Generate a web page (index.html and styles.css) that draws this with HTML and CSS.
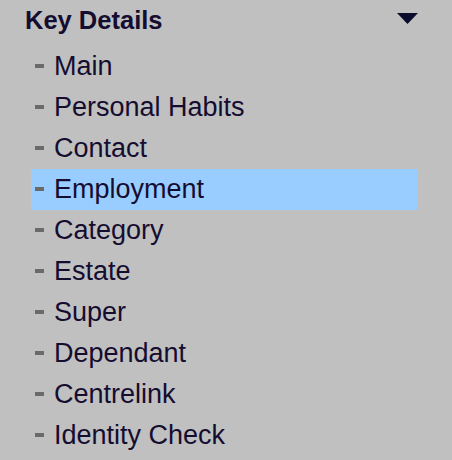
FILE: index.html
```html
<!DOCTYPE html>
<html lang="en">
<head>
  <meta charset="UTF-8" />
  <title>Key Details</title>
  <link rel="stylesheet" href="styles.css">
</head>
<body>
  <div class="panel">
    <div class="panel-header">
      <span class="panel-title">Key Details</span>
      <svg class="caret" width="21" height="11" viewBox="0 0 21 11">
        <polygon points="0,0 21,0 10.5,11" fill="#0b0b2e" />
      </svg>
    </div>
    <ul class="menu">
      <li class="menu-item">Main</li>
      <li class="menu-item">Personal Habits</li>
      <li class="menu-item">Contact</li>
      <li class="menu-item active">Employment</li>
      <li class="menu-item">Category</li>
      <li class="menu-item">Estate</li>
      <li class="menu-item">Super</li>
      <li class="menu-item">Dependant</li>
      <li class="menu-item">Centrelink</li>
      <li class="menu-item">Identity Check</li>
    </ul>
  </div>
</body>
</html>
```

FILE: styles.css
```css
body {
  margin: 0;
  background: #c0c0c0;
  font-family: 'Liberation Sans', Arial, sans-serif;
  color: #150d30;
}
.panel {
  width: 452px;
  height: 460px;
  overflow: hidden;
}
.panel-header {
  display: flex;
  align-items: center;
  justify-content: space-between;
  height: 40px;
  padding: 0 34px 0 25px;
  margin-bottom: 6px;
}
.panel-title {
  font-size: 25.5px;
  font-weight: bold;
  line-height: 40px;
}
.caret {
  display: block;
  margin-top: -4px;
}
.menu {
  list-style: none;
  margin: 0 0 0 31px;
  padding: 0;
  width: 386px;
}
.menu-item {
  height: 41px;
  line-height: 41px;
  font-size: 27px;
  padding-left: 4px;
  white-space: nowrap;
}
.menu-item.active {
  background: #99ccff;
}
/* gray bullet bar before each entry */
.menu-item::before {
  content: "";
  display: inline-block;
  width: 9px;
  height: 4px;
  margin-right: 10px;
  background: #6a6a6a;
  vertical-align: 7px;
}
```
